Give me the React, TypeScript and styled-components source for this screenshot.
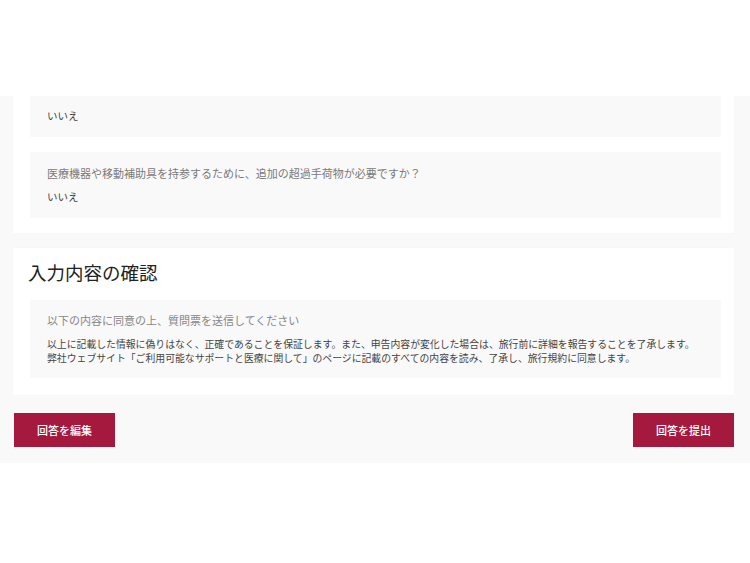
import React, { useLayoutEffect, useRef } from 'react'
import styled, { createGlobalStyle } from 'styled-components';

const answers: { q?: string; a: string }[] = [
  { a: 'いいえ' },
  { q: '医療機器や移動補助具を持参するために、追加の超過手荷物が必要ですか？', a: 'いいえ' },
];

export default function App() {
  const panelRef = useRef<HTMLDivElement>(null);

  // the form panel is scrolled to its end
  useLayoutEffect(() => {
    const el = panelRef.current;
    if (el) el.scrollTop = el.scrollHeight;
  }, []);

  return (
    <>
      <GlobalStyle />
      <TopSpace />
      <Panel ref={panelRef}>
        <Card $bottom={15}>
          <AnswerList>
            {answers.map((item, i) => (
              <AnswerBox key={i}>
                {item.q && <Question>{item.q}</Question>}
                <Answer>{item.a}</Answer>
              </AnswerBox>
            ))}
          </AnswerList>
        </Card>
        <Card $bottom={17}>
          <Heading>入力内容の確認</Heading>
          <AgreeBox>
            <AgreeLead>以下の内容に同意の上、質問票を送信してください</AgreeLead>
            <AgreeText>
              以上に記載した情報に偽りはなく、正確であることを保証します。また、申告内容が変化した場合は、旅行前に詳細を報告することを了承します。
              <br />
              弊社ウェブサイト「ご利用可能なサポートと医療に関して」のページに記載のすべての内容を読み、了承し、旅行規約に同意します。
            </AgreeText>
          </AgreeBox>
        </Card>
        <Actions>
          <Button>回答を編集</Button>
          <Button>回答を提出</Button>
        </Actions>
      </Panel>
    </>
  )
}

const GlobalStyle = createGlobalStyle`
    body {
        margin: 0;
        background: #ffffff;
        font-family: "Noto Sans CJK JP", "Noto Sans", sans-serif;
    }
`;

const TopSpace = styled.div`
    height: 96px;
`;

const Panel = styled.div`
    height: 367px;
    box-sizing: border-box;
    overflow: hidden;
    background: #f9f9f9;
    padding: 0 16px 16px 13px;
`;

const Card = styled.section<{ $bottom: number }>`
    background: #ffffff;
    padding: 15px 13px ${props => props.$bottom}px 17px;
    margin-bottom: 15px;
    box-shadow: 0 0 2px rgba(0, 0, 0, 0.03);
`;

const AnswerList = styled.div`
    display: flex;
    flex-direction: column;
    gap: 15px;
`;

const AnswerBox = styled.div`
    background: #f9f9f9;
    padding: 14px 17px;
`;

const Question = styled.p`
    margin: 0 0 10px;
    font-size: 11px;
    line-height: 14px;
    color: #7a7a7a;
`;

const Answer = styled.p`
    margin: 0;
    font-size: 10.5px;
    line-height: 14px;
    color: #444;
`;

const Heading = styled.h2`
    margin: -1px 0 18px -2px;
    font-size: 18.5px;
    line-height: 20px;
    font-weight: 400;
    color: #222;
`;

const AgreeBox = styled.div`
    background: #f9f9f9;
    padding: 13px 17px;
`;

const AgreeLead = styled.p`
    margin: 0 0 10px;
    font-size: 11px;
    line-height: 14px;
    color: #888;
`;

const AgreeText = styled.p`
    margin: 0;
    font-size: 9.85px;
    line-height: 14px;
    color: #444;
`;

const Actions = styled.div`
    display: flex;
    justify-content: space-between;
    padding: 3px 0 0 1px;
`;

const Button = styled.button`
    width: 101px;
    height: 34px;
    border: none;
    border-radius: 0;
    background: #a6193e;
    color: #ffffff;
    font-family: inherit;
    font-size: 11px;
    font-weight: 500;
    cursor: pointer;
`;
